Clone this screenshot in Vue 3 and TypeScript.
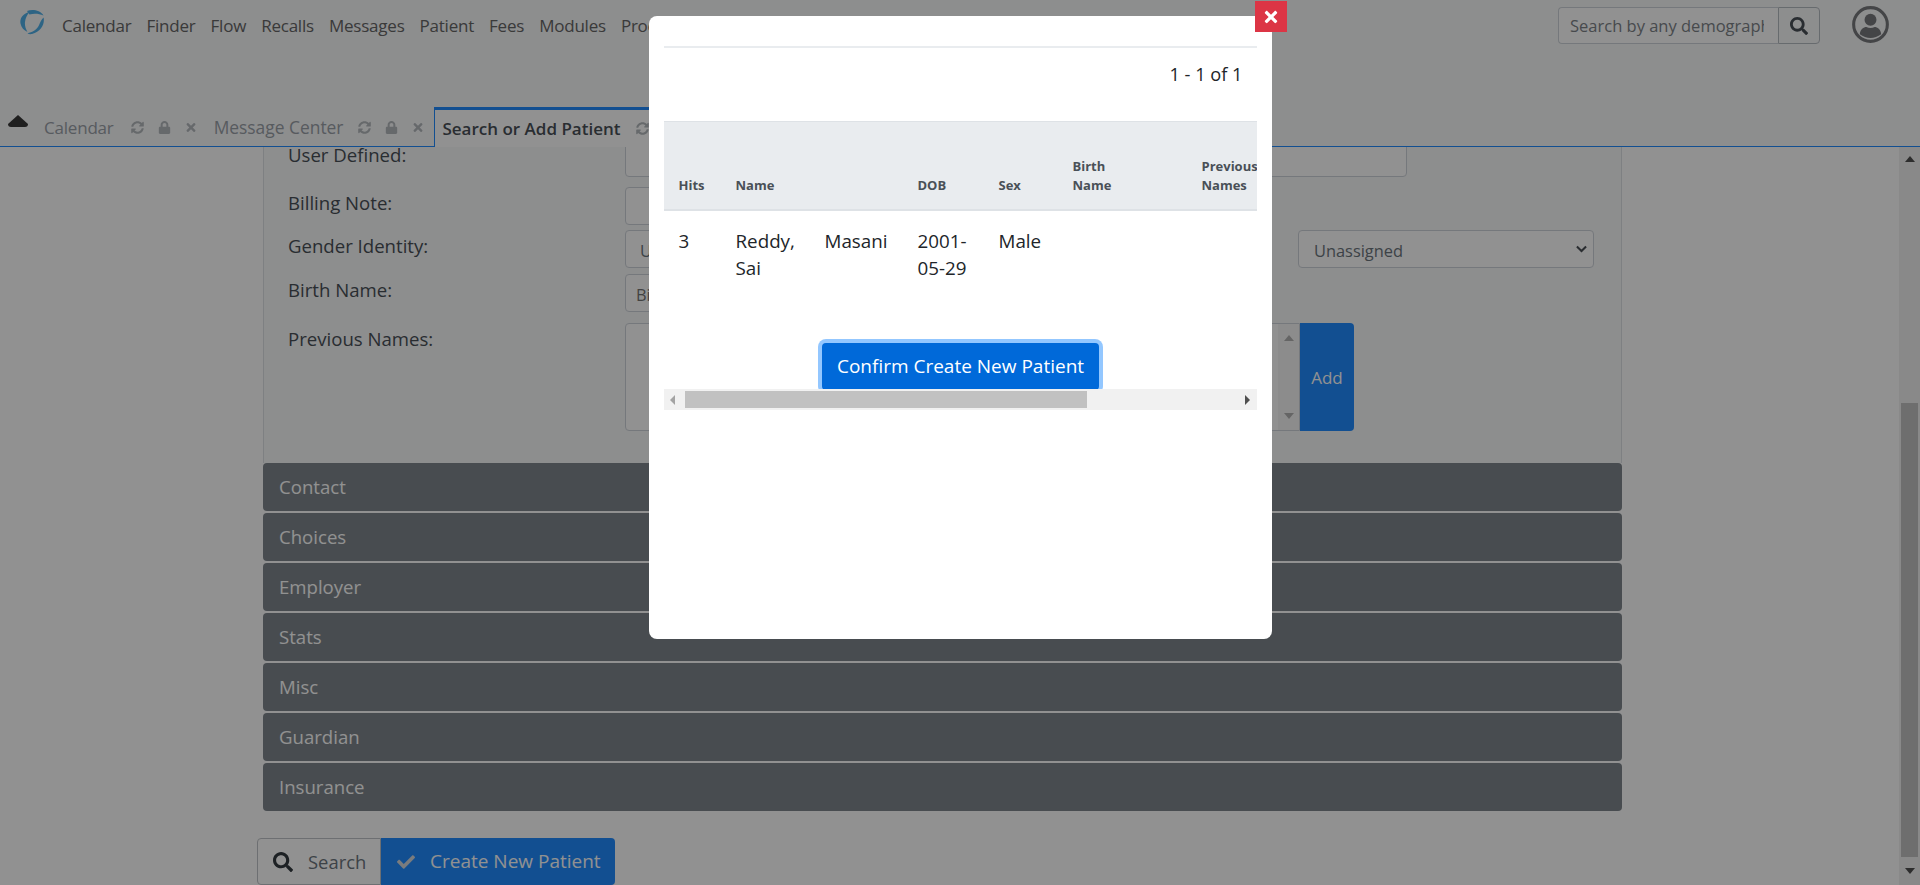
<script setup lang="ts">
const navItems = ['Calendar', 'Finder', 'Flow', 'Recalls', 'Messages', 'Patient', 'Fees', 'Modules', 'Procedures']
const accordion = ['Contact', 'Choices', 'Employer', 'Stats', 'Misc', 'Guardian', 'Insurance']
const columns = ['Hits', 'Name', '', 'DOB', 'Sex', 'Birth\nName', 'Previous\nNames', 'Phone']
const cells = ['3', 'Reddy, Sai', 'Masani', '2001-05-29', 'Male', '', '', '']
const syncPath = 'M370.72 133.28C339.458 104.008 298.888 87.962 255.848 88c-77.458.068-144.328 53.178-162.791 126.85-1.344 5.363-6.122 9.15-11.651 9.15H24.103c-7.498 0-13.194-6.807-11.807-14.176C33.933 94.924 134.813 8 256 8c66.448 0 126.791 26.136 171.315 68.685L463.03 40.97C478.149 25.851 504 36.559 504 57.941V192c0 13.255-10.745 24-24 24H345.941c-21.382 0-32.09-25.851-16.971-40.971l41.75-41.749zM32 296h134.059c21.382 0 32.09 25.851 16.971 40.971l-41.75 41.75c31.262 29.273 71.835 45.319 114.876 45.28 77.418-.07 144.315-53.144 162.787-126.849 1.344-5.363 6.122-9.15 11.651-9.15h57.304c7.498 0 13.194 6.807 11.807 14.176C478.067 417.076 377.187 504 256 504c-66.448 0-126.791-26.136-171.315-68.685L48.97 471.03C33.851 486.149 8 475.441 8 454.059V320c0-13.255 10.745-24 24-24z'
const lockPath = 'M400 224h-24v-72C376 68.2 307.8 0 224 0S72 68.2 72 152v72H48c-26.5 0-48 21.5-48 48v192c0 26.5 21.5 48 48 48h352c26.5 0 48-21.5 48-48V272c0-26.5-21.5-48-48-48zm-104 0H152v-72c0-39.7 32.3-72 72-72s72 32.3 72 72v72z'
const timesPath = 'M242.72 256l100.07-100.07c12.28-12.28 12.28-32.19 0-44.48l-22.24-22.24c-12.28-12.28-32.19-12.28-44.48 0L176 189.28 75.93 89.21c-12.28-12.28-32.19-12.28-44.48 0L9.21 111.45c-12.28 12.28-12.28 32.19 0 44.48L109.28 256 9.21 356.07c-12.28 12.28-12.28 32.19 0 44.48l22.24 22.24c12.28 12.28 32.2 12.28 44.48 0L176 322.72l100.07 100.07c12.28 12.28 32.2 12.28 44.48 0l22.24-22.24c12.28-12.28 12.28-32.19 0-44.48L242.72 256z'
const searchPath = 'M505 442.7L405.3 343c-4.5-4.5-10.6-7-17-7H372c27.6-35.3 44-79.7 44-128C416 93.1 322.9 0 208 0S0 93.1 0 208s93.1 208 208 208c48.3 0 92.7-16.4 128-44v16.3c0 6.4 2.5 12.5 7 17l99.7 99.7c9.4 9.4 24.6 9.4 33.9 0l28.3-28.3c9.4-9.4 9.4-24.6.1-34zM208 336c-70.7 0-128-57.2-128-128 0-70.7 57.2-128 128-128 70.7 0 128 57.2 128 128 0 70.7-57.2 128-128 128z'
const checkPath = 'M173.898 439.404l-166.4-166.4c-9.997-9.997-9.997-26.206 0-36.204l36.203-36.204c9.997-9.998 26.207-9.998 36.204 0L192 312.69 432.095 72.596c9.997-9.997 26.207-9.997 36.204 0l36.203 36.204c9.997 9.997 9.997 26.206 0 36.204l-294.4 294.401c-9.998 9.997-26.207 9.997-36.204-.001z'
const tabs = [
  { name: 'Calendar', active: false },
  { name: 'Message Center', active: false },
  { name: 'Search or Add Patient', active: true }
]
</script>

<template>
  <div class="page">
    <header class="top">
      <div class="nav-row">
        <svg class="logo" viewBox="0 0 24 25" fill="#4fb0e8">
          <path d="M9.5 2 C3 3.5 -0.5 8.5 0.5 13.5 C1.2 17.5 4 20.5 7.5 22 C5.5 18.5 4.6 15 5 12 C5.4 8 7 5 9.5 2 Z" />
          <path d="M7 1 C12 -0.8 20 -0.2 23.5 5.5 C19 3.5 14 3 9.5 4.5 Z" />
          <path d="M23.6 7.5 C25 14 21 22 12 24 C10 24.4 8.5 24 7.5 23.2 C12 22.5 17.5 20 19.5 14 C20.3 12 21.5 9.5 23.6 7.5 Z" />
        </svg>
        <nav class="nav">
          <a v-for="item in navItems" :key="item" class="nav-link">{{ item }}</a>
        </nav>
        <div class="demo-search">
          <input class="demo-input" placeholder="Search by any demographics" />
          <button class="demo-btn">
            <svg viewBox="0 0 512 512" class="ico-18"><path :d="searchPath" /></svg>
          </button>
        </div>
        <svg class="avatar" viewBox="0 0 36 36">
          <circle cx="18" cy="18" r="16.4" fill="none" stroke="#787a7d" stroke-width="3" />
          <circle cx="18" cy="13.4" r="5.8" fill="#787a7d" />
          <path d="M7.6 27.6 C8 22.6 11.4 20.4 14 20.4 C16.4 21.6 19.6 21.6 22 20.4 C24.6 20.4 28 22.6 28.4 27.6 C22 32.4 14 32.4 7.6 27.6 Z" fill="#787a7d" />
        </svg>
      </div>
      <div class="tab-row">
        <svg class="caret" viewBox="0 0 20 12"><path d="M10 0 L20 9 Q20 12 17 12 L3 12 Q0 12 0 9 Z" /></svg>
        <div v-for="tab in tabs" :key="tab.name" class="tab" :class="{ active: tab.active }">
          <span class="tab-name">{{ tab.name }}</span>
          <svg class="tab-ico sync" viewBox="0 0 512 512"><path :d="syncPath" /></svg>
          <svg class="tab-ico lock" viewBox="0 0 448 512"><path :d="lockPath" /></svg>
          <svg class="tab-ico times" viewBox="0 0 352 512"><path :d="timesPath" /></svg>
        </div>
      </div>
    </header>

    <div class="body">
      <main class="content">
        <section class="panel">
          <div class="row row-user">
            <label class="lbl">User Defined:</label>
            <input class="field user-field" />
          </div>
          <div class="row row-billing">
            <label class="lbl">Billing Note:</label>
            <input class="field short-field" />
          </div>
          <div class="row row-gender">
            <label class="lbl">Gender Identity:</label>
            <select class="field short-field"><option>Unassigned</option></select>
            <div class="select-wrap">
              <select class="field side-select"><option>Unassigned</option></select>
              <svg class="chevron" viewBox="0 0 12 8" fill="none" stroke="#4a5056" stroke-width="2.2">
                <path d="M1 1.2 L6 6.2 L11 1.2" />
              </svg>
            </div>
          </div>
          <div class="row row-birth">
            <label class="lbl">Birth Name:</label>
            <input class="field short-field" placeholder="Birth Name" />
          </div>
          <div class="row row-prev">
            <label class="lbl">Previous Names:</label>
            <div class="prev-box">
              <div class="fake-scroll">
                <i class="arrow up"></i>
                <i class="arrow down"></i>
              </div>
            </div>
            <button class="add-btn">Add</button>
          </div>
        </section>

        <div class="accordion">
          <div v-for="item in accordion" :key="item" class="acc-item">{{ item }}</div>
        </div>

        <div class="actions">
          <button class="act act-search">
            <svg viewBox="0 0 512 512" class="ico-20"><path :d="searchPath" /></svg>
            Search
          </button>
          <button class="act act-create">
            <svg viewBox="0 0 512 512" class="ico-18 white"><path :d="checkPath" /></svg>
            Create New Patient
          </button>
        </div>
      </main>

      <aside class="page-scroll">
        <i class="arrow up dark"></i>
        <div class="page-thumb"></div>
        <i class="arrow down dark"></i>
      </aside>
    </div>

    <div class="overlay">
      <div class="modal">
        <button class="close">
          <svg viewBox="0 0 352 512" class="close-ico"><path :d="timesPath" /></svg>
        </button>
        <div class="modal-line"></div>
        <div class="count">1 - 1 of 1</div>
        <div class="table-clip">
          <table class="results">
            <colgroup>
              <col style="width: 57px" />
              <col style="width: 89px" />
              <col style="width: 93px" />
              <col style="width: 81px" />
              <col style="width: 74px" />
              <col style="width: 129px" />
              <col style="width: 129px" />
              <col style="width: 160px" />
            </colgroup>
            <thead>
              <tr><th v-for="(col, i) in columns" :key="i">{{ col }}</th></tr>
            </thead>
            <tbody>
              <tr><td v-for="(cell, i) in cells" :key="i">{{ cell }}</td></tr>
            </tbody>
          </table>
          <div class="confirm-row">
            <button class="confirm">Confirm Create New Patient</button>
          </div>
        </div>
        <div class="h-scroll">
          <i class="h-arrow left"></i>
          <div class="h-thumb"></div>
          <i class="h-arrow right"></i>
        </div>
      </div>
    </div>
  </div>
</template>

<style>
html,
body {
  margin: 0;
  overflow: hidden;
}
</style>

<style scoped>
.page {
  height: 885px;
  display: flex;
  flex-direction: column;
  overflow: hidden;
  background: #fff;
  color: #495057;
  font-family: 'Open Sans', 'Noto Sans', sans-serif;
  font-size: 17px;
  line-height: 27px;
}

/* top bar */
.top {
  height: 147px;
  flex: none;
  box-sizing: border-box;
  background: #f8f9fa;
  border-bottom: 1px solid #218cff;
  display: flex;
  flex-direction: column;
}

.nav-row {
  height: 107px;
  flex: none;
  display: flex;
  align-items: flex-start;
  padding: 10px 31px 0 20px;
  box-sizing: border-box;
}

.logo {
  width: 24px;
  height: 25px;
  flex: none;
}

.nav {
  display: flex;
  gap: 15px;
  margin-left: 18px;
  margin-top: 2px;
  white-space: nowrap;
  letter-spacing: -0.22px;
}

.nav-link {
  color: #666;
}

.demo-search {
  margin-left: auto;
  margin-top: -3px;
  display: flex;
  height: 37px;
}

.demo-input {
  width: 220px;
  box-sizing: border-box;
  border: 1px solid #ced4da;
  border-right: none;
  border-radius: 4px 0 0 4px;
  padding: 0 14px 0 11px;
  background: #fff;
  font: inherit;
  font-size: 16.5px;
  color: #495057;
  outline: none;
}

.demo-input::placeholder {
  color: #7d8388;
  opacity: 1;
}

.demo-btn {
  width: 42px;
  padding: 0;
  display: flex;
  align-items: center;
  justify-content: center;
  background: #f8f9fa;
  border: 1px solid #b6bcc2;
  border-radius: 0 4px 4px 0;
}

.avatar {
  width: 37px;
  height: 37px;
  margin-left: 32px;
  margin-top: -4px;
  flex: none;
}

.tab-row {
  height: 39px;
  display: flex;
  align-items: stretch;
  position: relative;
}

.caret {
  width: 20px;
  height: 12px;
  margin: 8px -3px 0 8px;
  fill: #383838;
  flex: none;
}

.tab {
  display: flex;
  align-items: center;
  padding: 2px 0 0 18px;
  color: #9aa0a8;
  white-space: nowrap;
  font-size: 17.4px;
}

.tab:first-of-type {
  padding-left: 19px;
  font-size: 17px;
  letter-spacing: -0.2px;
}

.tab.active {
  background: #fff;
  color: #495057;
  font-weight: 600;
  font-size: 17px;
  border-top: 3px solid #218cff;
  border-left: 1px solid #218cff;
  height: 40px;
  box-sizing: border-box;
  margin-left: 11px;
  padding: 0 8px 0 7px;
}

.tab-ico {
  fill: #b4b9bd;
  height: 13px;
  flex: none;
}

.tab-ico.sync {
  width: 13px;
  margin-left: 15px;
}

.tab:first-of-type .tab-ico.sync {
  margin-left: 17px;
}

.tab-ico.lock {
  width: 13px;
  margin-left: 14px;
}

.tab-ico.times {
  width: 10px;
  margin-left: 15px;
}

.ico-18 {
  width: 18px;
  height: 18px;
  fill: #495057;
  flex: none;
}

.ico-18.white {
  fill: #d6dade;
}

.ico-20 {
  width: 20px;
  height: 20px;
  fill: #343a40;
  flex: none;
}

/* page under the dialog */
.body {
  flex: 1;
  min-height: 0;
  display: flex;
  overflow: hidden;
}

.content {
  flex: 1;
  min-width: 0;
  padding-left: 263px;
  padding-right: 277px;
  overflow: hidden;
}

.panel {
  margin-top: -8px;
  height: 324px;
  box-sizing: border-box;
  border-left: 1px solid #dde1e4;
  border-right: 1px solid #dde1e4;
  background: #f8f9fa;
  padding-left: 24px;
  display: flex;
  flex-direction: column;
}

.row {
  display: flex;
  align-items: flex-start;
}

.row-billing {
  margin-top: 10px;
}

.row-gender {
  margin-top: 5px;
}

.row-birth {
  margin-top: 6px;
}

.row-prev {
  margin-top: 11px;
}

.lbl {
  width: 337px;
  flex: none;
  padding-top: 2px;
  color: #495057;
  font-size: 18.6px;
}

.field {
  height: 38px;
  box-sizing: border-box;
  background: #fff;
  border: 1px solid #ced4da;
  border-radius: 4px;
  font: inherit;
  font-size: 16.4px;
  padding: 2px 10px 0;
  color: #6c757d;
  outline: none;
}

.user-field {
  width: 782px;
}

.short-field {
  width: 400px;
}

.select-wrap {
  position: relative;
  margin-left: 273px;
}

.side-select {
  width: 296px;
  padding-left: 15px;
  appearance: none;
  display: block;
}

.chevron {
  position: absolute;
  right: 7px;
  top: 15px;
  width: 11px;
  height: 8px;
}

.prev-box {
  width: 675px;
  height: 108px;
  box-sizing: border-box;
  background: #fff;
  border: 1px solid #ced4da;
  border-radius: 4px 0 0 4px;
  display: flex;
  justify-content: flex-end;
}

.fake-scroll {
  width: 21px;
  background: #f7f7f7;
  display: flex;
  flex-direction: column;
  align-items: center;
  justify-content: space-between;
  padding: 11px 0;
  box-sizing: border-box;
}

.arrow {
  display: block;
  width: 0;
  height: 0;
  border-left: 5px solid transparent;
  border-right: 5px solid transparent;
}

.arrow.up {
  border-bottom: 6px solid #b2b2b2;
}

.arrow.down {
  border-top: 6px solid #b2b2b2;
}

.add-btn {
  width: 54px;
  height: 108px;
  border: none;
  border-radius: 0 4px 4px 0;
  background: #218cff;
  color: #fff;
  font: inherit;
  padding: 0;
}

.accordion {
  display: flex;
  flex-direction: column;
  gap: 2px;
}

.acc-item {
  height: 48px;
  line-height: 48px;
  box-sizing: border-box;
  padding-left: 16px;
  border-radius: 4px;
  background: #7f878d;
  color: #fff;
  font-size: 18.6px;
}

.actions {
  display: flex;
  margin-top: 27px;
  margin-left: -6px;
  height: 47px;
}

.act {
  display: flex;
  align-items: center;
  font: inherit;
  padding: 0;
  box-sizing: border-box;
  height: 47px;
}

.act-search {
  width: 124px;
  background: #fff;
  border: 1px solid #c0c4c8;
  border-radius: 4px 0 0 4px;
  color: #6c757d;
  padding-left: 15px;
  gap: 15px;
  font-size: 18.4px;
}

.act-create {
  width: 234px;
  background: #218cff;
  border: none;
  border-radius: 0 4px 4px 0;
  color: #fff;
  padding-left: 16px;
  gap: 15px;
  font-size: 19px;
}

.page-scroll {
  width: 21px;
  flex: none;
  background: #f1f1f1;
  display: flex;
  flex-direction: column;
  align-items: center;
  padding-top: 9px;
  box-sizing: border-box;
}

.arrow.dark.up {
  border-bottom-color: #505050;
}

.arrow.dark.down {
  border-top-color: #505050;
  margin-top: 11px;
}

.page-thumb {
  width: 17px;
  height: 454px;
  background: #c1c1c1;
  margin-top: 241px;
}

/* dialog */
.overlay {
  position: fixed;
  inset: 0;
  background: rgba(0, 0, 0, 0.43);
}

.modal {
  position: relative;
  width: 623px;
  height: 623px;
  margin: 16px auto 0;
  padding: 30px 15px 0;
  box-sizing: border-box;
  background: #fff;
  border-radius: 8px;
  color: #212529;
}

.close {
  position: absolute;
  top: -15px;
  right: -15px;
  width: 32px;
  height: 31px;
  padding: 0;
  border: none;
  background: #dc3545;
  display: flex;
  align-items: center;
  justify-content: center;
}

.close-ico {
  width: 14px;
  height: 18px;
  fill: #fff;
}

.modal-line {
  height: 2px;
  background: #e9ecef;
}

.count {
  margin-top: 13px;
  height: 60px;
  text-align: right;
  padding-right: 14px;
  font-size: 18.2px;
}

.table-clip {
  height: 268px;
  overflow: hidden;
}

.results {
  width: 812px;
  table-layout: fixed;
  border-collapse: collapse;
}

.results th {
  height: 88px;
  box-sizing: border-box;
  background: #e9ecef;
  border-top: 1px solid #dee2e6;
  border-bottom: 2px solid #dee2e6;
  padding: 0 0 14px 15px;
  font-size: 13px;
  line-height: 19px;
  font-weight: 700;
  text-align: left;
  vertical-align: bottom;
  color: #495057;
  white-space: pre-line;
}

.results td {
  padding: 17px 15px;
  vertical-align: top;
  font-size: 18.8px;
}

.confirm-row {
  width: 593px;
  display: flex;
  justify-content: center;
  margin-top: 44px;
}

.confirm {
  width: 277px;
  height: 47px;
  padding: 0 0 0 1px;
  border: none;
  border-radius: 4px;
  background: #0069d9;
  color: #fff;
  font: inherit;
  font-size: 19px;
  box-shadow: 0 0 0 4px #93c7ff;
}

.h-scroll {
  height: 21px;
  background: #f1f1f1;
  display: flex;
  align-items: center;
  position: relative;
}

.h-thumb {
  position: absolute;
  left: 21px;
  top: 2px;
  width: 402px;
  height: 17px;
  background: #c1c1c1;
}

.h-arrow {
  position: absolute;
  top: 6px;
  width: 0;
  height: 0;
  border-top: 5px solid transparent;
  border-bottom: 5px solid transparent;
}

.h-arrow.left {
  left: 6px;
  border-right: 5px solid #a3a3a3;
}

.h-arrow.right {
  right: 7px;
  border-left: 5px solid #505050;
}
</style>
